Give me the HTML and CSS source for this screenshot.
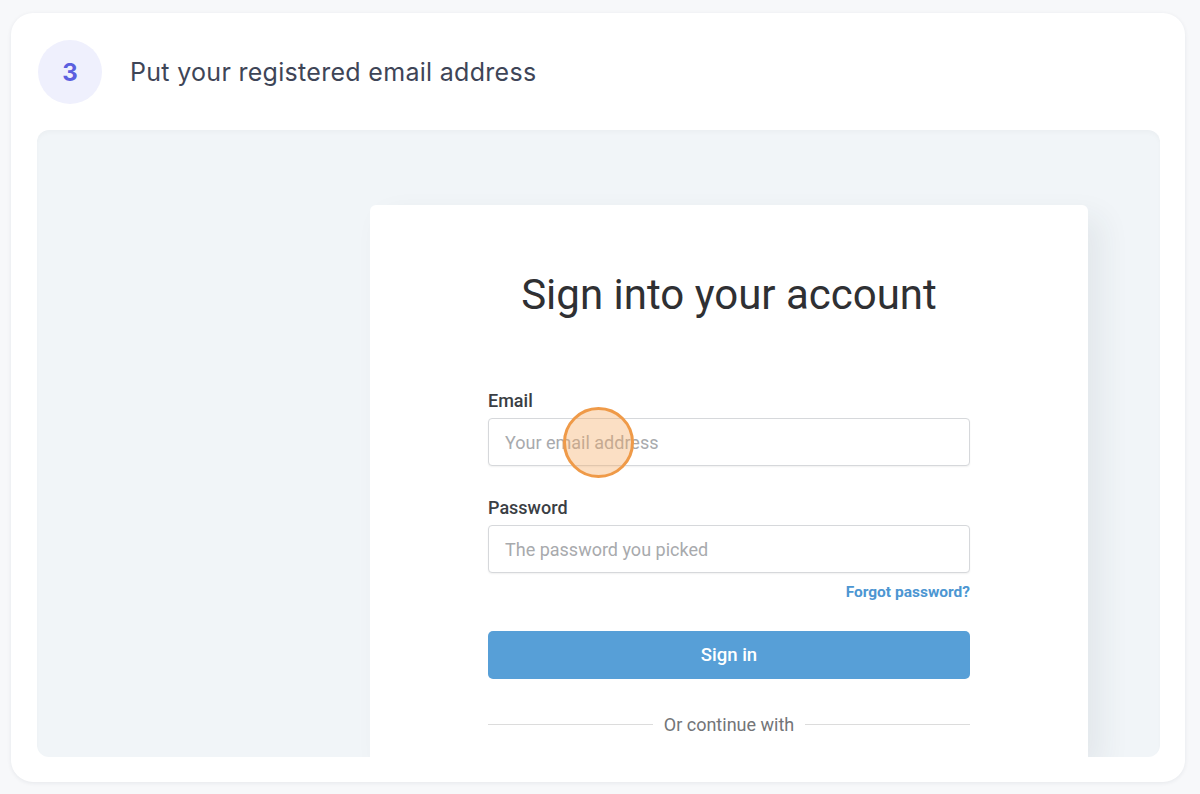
FILE: index.html
```html
<!DOCTYPE html>
<html lang="en">
<head>
<meta charset="utf-8">
<title>Step 3</title>
<link rel="stylesheet" href="styles.css">
</head>
<body>
<div class="card">
  <div class="step-header">
    <div class="step-num">3</div>
    <div class="step-title">Put your registered email address</div>
  </div>
  <div class="shot">
    <div class="login">
      <h1 class="login-title">Sign into your account</h1>
      <div class="form">
        <label class="label">Email</label>
        <div class="field-wrap">
          <div class="input"><span class="placeholder">Your email address</span></div>
          <div class="click-marker"></div>
        </div>
        <label class="label label-pw">Password</label>
        <div class="input"><span class="placeholder">The password you picked</span></div>
        <div class="forgot-row"><span class="forgot">Forgot password?</span></div>
        <div class="btn">Sign in</div>
        <div class="divider"><span class="line"></span><span class="divider-text">Or continue with</span><span class="line"></span></div>
      </div>
    </div>
  </div>
</div>
</body>
</html>
```

FILE: styles.css
```css
* { box-sizing: border-box; }
html, body { margin: 0; padding: 0; }
body {
  background: #f7f8fa;
  width: 1200px;
  height: 794px;
  overflow: hidden;
  font-family: "Inter", "Noto Sans", sans-serif;
}
.card {
  margin: 13px 15px 0 11px;
  height: 769px;
  background: #ffffff;
  border-radius: 22px;
  box-shadow: 0 1px 4px rgba(30, 40, 60, 0.08);
  padding: 27px 25px 25px 26px;
  display: flex;
  flex-direction: column;
}
.step-header {
  display: flex;
  align-items: center;
  gap: 28px;
  height: 64px;
  padding-left: 1px;
}
.step-num {
  width: 64px;
  height: 64px;
  border-radius: 50%;
  background: #eff0fd;
  color: #5b5fdf;
  font-weight: 700;
  font-size: 24px;
  display: flex;
  align-items: center;
  justify-content: center;
  font-family: "Inter", sans-serif;
}
.step-title {
  font-size: 25px;
  color: #3e4557;
  font-weight: 400;
  letter-spacing: 0.3px;
}
.shot {
  margin-top: 26px;
  flex: 1;
  background: #f1f5f8;
  border-radius: 12px;
  box-shadow: inset 0 3px 4px rgba(0, 0, 0, 0.025);
  overflow: hidden;
  padding: 75px 72px 0 333px;
}
.login {
  background: #ffffff;
  border-radius: 6px 6px 0 0;
  height: 100%;
  box-shadow: 14px 12px 30px rgba(40, 60, 70, 0.07);
  padding-top: 65px;
  font-family: "Roboto", "Liberation Sans", sans-serif;
}
.login-title {
  margin: 0;
  text-align: center;
  font-size: 42px;
  line-height: 50px;
  font-weight: 400;
  color: #2f3033;
}
.form {
  width: 482px;
  margin: 70px auto 0;
  display: flex;
  flex-direction: column;
}
.label {
  font-size: 18px;
  line-height: 21px;
  font-weight: 500;
  color: #3a3e44;
  margin-bottom: 7px;
}
.label-pw { margin-top: 31px; }
.field-wrap { position: relative; }
.input {
  height: 48px;
  border: 1px solid #d6d8db;
  border-radius: 4px;
  box-shadow: 0 1px 2px rgba(0, 0, 0, 0.06);
  display: flex;
  align-items: center;
  padding-left: 16px;
  background: #fff;
}
.placeholder {
  font-size: 18px;
  color: #a8aaad;
}
.click-marker {
  position: absolute;
  left: 75px;
  top: -11px;
  width: 71px;
  height: 71px;
  border-radius: 50%;
  background: rgba(245, 170, 100, 0.38);
  border: 3px solid #ef9a48;
}
.forgot-row {
  display: flex;
  justify-content: flex-end;
  margin-top: 10px;
}
.forgot {
  font-size: 15.5px;
  line-height: 19px;
  font-weight: 700;
  color: #4c96d2;
}
.btn {
  margin-top: 29px;
  height: 48px;
  border-radius: 5px;
  background: #579fd7;
  color: #ffffff;
  font-size: 18.5px;
  font-weight: 500;
  display: flex;
  align-items: center;
  justify-content: center;
}
.divider {
  margin-top: 35px;
  display: flex;
  align-items: center;
  gap: 11px;
  height: 21px;
}
.line {
  flex: 1;
  height: 1px;
  background: #dcdcdc;
}
.divider-text {
  font-size: 18px;
  color: #737578;
}
```
